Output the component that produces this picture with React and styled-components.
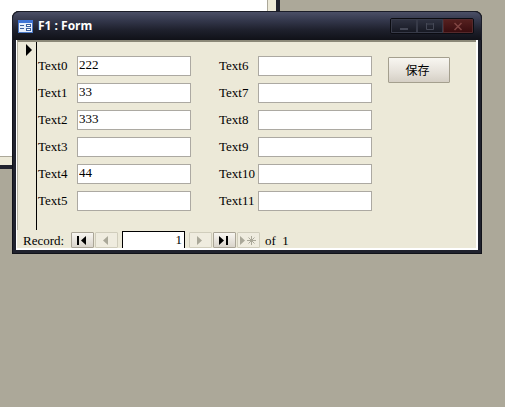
import { useState } from 'react'
import styled, { createGlobalStyle } from 'styled-components'

const leftFields = [
	{ name: 'Text0', value: '222' },
	{ name: 'Text1', value: '33' },
	{ name: 'Text2', value: '333' },
	{ name: 'Text3', value: '' },
	{ name: 'Text4', value: '44' },
	{ name: 'Text5', value: '' },
]
const rightFields = ['Text6', 'Text7', 'Text8', 'Text9', 'Text10', 'Text11'].map(name => ({ name, value: '' }))

const FormIcon = () => (
	<svg width="15" height="13" viewBox="0 0 15 13" shapeRendering="crispEdges" aria-hidden="true">
		<rect width="15" height="13" fill="#4a78c4" />
		<rect width="15" height="3" fill="#3f74d6" />
		<rect x="1" y="3" width="13" height="9" fill="#e6eefb" />
		<path d="M2 5h4v1H2zM2 8h4v1H2z" fill="#3b5f9f" />
		<path d="M8 4h5v3H8zM8 8h5v3H8z" fill="#3b5f9f" />
		<path d="M9 5h3v1H9zM9 9h3v1H9z" fill="#fff" />
	</svg>
)

const navPaths = {
	first: 'M5 3h2v9H5zM14 3v9L9 7.5z',
	previous: 'M12 3v9L7 7.5z',
	next: 'M7 3v9l5-4.5z',
	last: 'M5 3v9l5-4.5zM12 3h2v9h-2z',
	add: 'M2 3v9l5-4.5z',
}

const NavIcon = ({ type }) => (
	<svg width="21" height="14" viewBox="0 0 21 14" aria-hidden="true">
		<path d={navPaths[type]} fill="currentColor" />
		{type === 'add' && <path d="M13.5 3v9M9 7.5h9M10.5 4.5l6 6M16.5 4.5l-6 6" stroke="currentColor" />}
	</svg>
)

const FieldColumn = ({ fields }) => {
	const [values, setValues] = useState(fields.map(field => field.value))
	const handleChange = (index, value) => setValues(values.map((old, i) => (i === index ? value : old)))

	return (
		<Column>
			{fields.map((field, index) => (
				<Field key={field.name}>
					<label htmlFor={field.name}>{field.name}</label>
					<input id={field.name} value={values[index]} onChange={e => handleChange(index, e.target.value)} />
				</Field>
			))}
		</Column>
	)
}

const App = () => {
	const [record, setRecord] = useState('1')

	return (
		<Desktop>
			<GlobalStyle />
			<BackWindow><BackPage /></BackWindow>
			<FormWindow>
				<TitleBar>
					<FormIcon />
					<h1>F1 : Form</h1>
					<WindowButtons>
						<WindowButton aria-label="Minimize">
							<svg width="12" height="9" viewBox="0 0 12 9"><path d="M2 7h8" stroke="currentColor" strokeWidth="2" /></svg>
						</WindowButton>
						<WindowButton aria-label="Maximize">
							<svg width="12" height="9" viewBox="0 0 12 9"><path d="M2 2h8M2.5 1v6.5h7V1" fill="none" stroke="currentColor" /></svg>
						</WindowButton>
						<WindowButton aria-label="Close" $close>
							<svg width="12" height="9" viewBox="0 0 12 9"><path d="M2.5 1l7 7M9.5 1l-7 7" stroke="currentColor" strokeWidth="1.5" /></svg>
						</WindowButton>
					</WindowButtons>
				</TitleBar>
				<Client>
					<FormBody onSubmit={e => e.preventDefault()}>
						<Selector>
							<svg width="6" height="12" viewBox="0 0 6 12" aria-hidden="true"><path d="M0 0v12l6-6z" /></svg>
						</Selector>
						<FieldColumn fields={leftFields} />
						<FieldColumn fields={rightFields} />
						<SaveButton>保存</SaveButton>
					</FormBody>
					<RecordBar>
						<label htmlFor="record">Record:</label>
						<NavGroup>
							<NavButton aria-label="First record"><NavIcon type="first" /></NavButton>
							<NavButton aria-label="Previous record" disabled><NavIcon type="previous" /></NavButton>
						</NavGroup>
						<RecordInput id="record" value={record} onChange={e => setRecord(e.target.value)} />
						<NavGroup>
							<NavButton aria-label="Next record" disabled><NavIcon type="next" /></NavButton>
							<NavButton aria-label="Last record"><NavIcon type="last" /></NavButton>
							<NavButton aria-label="New record" disabled><NavIcon type="add" /></NavButton>
						</NavGroup>
						<Total>of&nbsp; 1</Total>
					</RecordBar>
				</Client>
			</FormWindow>
		</Desktop>
	)
}

export default App

const GlobalStyle = createGlobalStyle`
	* {
		box-sizing: border-box;
	}

	body {
		margin: 0;
		background: #aca899;
		color: #000;
		font-family: 'Liberation Serif', 'Noto Sans CJK SC', serif;
		font-size: 13px;
	}

	button, input {
		margin: 0;
		color: #000;
		font-family: inherit;
	}

	svg {
		display: block;
	}
`

const Desktop = styled.main`
	position: relative;
	padding: 11px 23px 0 12px;
	min-height: 100vh;
	overflow: hidden;
`

const BackWindow = styled.div`
	position: absolute;
	top: 0;
	left: 0;

	padding: 0 8px 8px 0;
	width: 280px;
	height: 169px;

	background: #ece9d8;
	border: solid #20222e;
	border-width: 0 4px 4px 0;
`

const BackPage = styled.div`
	height: 100%;
	background: #fff;
	border: solid #aca899;
	border-width: 0 1px 1px 0;
`

const FormWindow = styled.section`
	position: relative;
	padding: 0 4px 4px;
	background: #20222e;
	border-radius: 7px 7px 0 0;
	box-shadow: inset 0 0 0 1px #111219;
`

const TitleBar = styled.header`
	display: flex;
	align-items: center;
	gap: 5px;

	margin: 0 -4px;
	padding: 0 7px 0 5px;
	height: 29px;

	background: linear-gradient(#4b4f66, #34384c 30%, #1e202c 65%, #101118);
	border: 1px solid #1b1d28;
	border-bottom: 0;
	border-radius: 7px 7px 0 0;

	h1 {
		margin: 0;
		color: #fff;
		font: bold 12px/16px 'Open Sans', sans-serif;
	}
`

const WindowButtons = styled.div`
	display: flex;
	margin-left: auto;
	border: 1px solid #0b0c12;
	border-radius: 2px;
	overflow: hidden;
`

const WindowButton = styled.button`
	display: flex;
	align-items: center;
	justify-content: center;

	padding: 0;
	width: ${props => props.$close ? '30px' : '26px'};
	height: 14px;

	color: ${props => props.$close ? '#804542' : '#454856'};
	background: ${props => props.$close ? 'linear-gradient(#55201f, #3a0d0f)' : 'linear-gradient(#2e3140, #171923)'};
	border: 1px solid ${props => props.$close ? '#55292b' : '#373a48'};
	box-shadow: 1px 0 #0b0c12;
`

const Client = styled.div`
	background: #ece9d8;
	border: solid #fff;
	border-width: 0 2px 2px 1px;
`

const FormBody = styled.form`
	display: flex;
	align-items: flex-start;
	border-top: 2px solid #8b8878;
	border-left: 1px solid #b5b2a3;
`

const Selector = styled.div`
	padding: 2px 0 0 8px;
	width: 19px;
	height: 188px;
	border-right: 1px solid #000;
`

const Column = styled.div`
	display: grid;
	gap: 7px;
	padding: 14px 28px 0 1px;

	& + & {
		padding-right: 16px;
		padding-left: 0;
	}
`

const Field = styled.div`
	display: grid;
	grid-template-columns: 39px 114px;

	label {
		line-height: 20px;
		white-space: nowrap;
	}

	input {
		padding: 0 1px 2px;
		width: 100%;
		height: 20px;
		font-size: 13px;
		border: 1px solid #aca9a2;
		border-radius: 0;
	}
`

const SaveButton = styled.button`
	margin-top: 15px;
	padding: 0 3px 2px 0;
	width: 62px;
	height: 26px;

	font: 12px 'Noto Sans CJK SC', sans-serif;
	background: linear-gradient(#f8f6f1, #e5e1d9 60%, #d5cfc5);
	border: 1px solid #a49f8e;
	border-radius: 1px;
`

const RecordBar = styled.div`
	display: flex;
	align-items: center;
	gap: 4px;
	padding: 1px 0 0 6px;
	height: 18px;

	label {
		padding-top: 2px;
		width: 44px;
	}
`

const NavGroup = styled.div`
	display: flex;
	gap: 1px;
`

const NavButton = styled.button`
	display: flex;
	align-items: center;
	justify-content: center;

	padding: 0;
	width: 23px;
	height: 16px;

	background: linear-gradient(#f8f6f1, #d9d4cb);
	border: 1px solid #aaa597;
	border-radius: 1px;

	&:disabled {
		color: #aaa899;
		background: #efecdf;
		border-color: #d0cdbc;
	}
`

const RecordInput = styled.input`
	padding: 0 2px 0 0;
	width: 63px;
	height: 17px;

	font-size: 13px;
	text-align: right;
	border: solid #000;
	border-width: 1px 1px 0 1px;
	border-radius: 0;
`

const Total = styled.span`
	padding: 2px 0 0 1px;
`
